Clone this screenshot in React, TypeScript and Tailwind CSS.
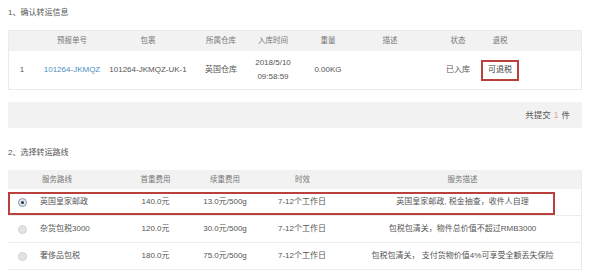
import React from 'react'

interface Route {
  name: string
  first: string
  next: string
  time: string
  desc: string
  selected?: boolean
}

const routes: Route[] = [
  { name: '英国皇家邮政', first: '140.0元', next: '13.0元/500g', time: '7-12个工作日', desc: '英国皇家邮政, 税金抽查，收件人自理', selected: true },
  { name: '杂货包税3000', first: '120.0元', next: '30.0元/500g', time: '7-12个工作日', desc: '包税包清关，物件总价值不超过RMB3000' },
  { name: '奢侈品包税', first: '180.0元', next: '75.0元/500g', time: '7-12个工作日', desc: '包税包清关， 支付货物价值4%可享受全额丢失保险' },
]

const cols1 = 'grid grid-cols-[26px_74px_78px_68px_36px_74px_50px_22px_42px_42px_1fr]'
const cols2 = 'grid grid-cols-[28px_89px_61px_78px_80px_1fr]'

export default function App() {
  return (
    <div
      className="h-[279px] w-[591px] overflow-hidden bg-white px-2 text-[8px] text-[#555]"
      style={{ fontFamily: '"Liberation Sans", "Noto Sans CJK SC", sans-serif' }}
    >
      {/* Section 1 */}
      <div className="pt-[8px] leading-[10px]">1、确认转运信息</div>

      <div className="mt-[12px] w-[574px] border border-[#ebebeb]">
        <div className={`${cols1} h-[20px] items-center bg-[#f2f2f2] text-center text-[7.5px] text-[#777]`}>
          <span />
          <span>预报单号</span>
          <span>包裹</span>
          <span>所属仓库</span>
          <span>入库时间</span>
          <span>重量</span>
          <span>描述</span>
          <span />
          <span>状态</span>
          <span>退税</span>
          <span />
        </div>
        <div className={`${cols1} h-[38px] items-center text-center`}>
          <span>1</span>
          <span className="text-[#4a8fc4]">101264-JKMQZ</span>
          <span>101264-JKMQZ-UK-1</span>
          <span>英国仓库</span>
          <span className="leading-[14px] whitespace-nowrap">
            2018/5/10
            <br />
            09:58:59
          </span>
          <span>0.00KG</span>
          <span />
          <span />
          <span>已入库</span>
          <span className="flex justify-center">
            <span className="flex h-[21px] w-[38px] items-center justify-center border-2 border-[#b8403d] text-[#444]">
              可退税
            </span>
          </span>
          <span />
        </div>
      </div>

      <div className="mt-[12px] flex h-[26px] w-[574px] items-center justify-end bg-[#f2f2f2] pr-[12px] text-[8.5px] text-[#555]">
        共提交 <span className="mx-[3px] text-[#eaa08e]">1</span> 件
      </div>

      {/* Section 2 */}
      <div className="mt-[20px] leading-[10px]">2、选择转运路线</div>

      <div className="mt-[12px] w-[574px] border-r border-[#ebebeb]">
        <div className={`${cols2} h-[19px] items-center bg-[#f2f2f2] text-[7.5px] text-[#777]`}>
          <span />
          <span className="pl-[6px]">服务路线</span>
          <span className="text-center">首重费用</span>
          <span className="text-center">续重费用</span>
          <span className="pl-[31px]">时效</span>
          <span className="text-center">服务描述</span>
        </div>
        {routes.map((r) => (
          <div key={r.name} className={`${cols2} relative h-[27px] items-center border-b border-[#ececec]`}>
            <span className="flex justify-center">
              {r.selected ? (
                <span className="flex h-[9px] w-[9px] items-center justify-center rounded-full border border-[#8a96a8] bg-[#dde6f2]">
                  <span className="h-[3px] w-[3px] rounded-full bg-[#333]" />
                </span>
              ) : (
                <span className="h-[9px] w-[9px] rounded-full border border-[#d0d0d0] bg-[#e4e4e4]" />
              )}
            </span>
            <span className="pl-[4px]">{r.name}</span>
            <span className="text-center">{r.first}</span>
            <span className="text-center">{r.next}</span>
            <span className="pl-[14px]">{r.time}</span>
            <span className="text-center">{r.desc}</span>
            {r.selected && (
              <div className="absolute left-0 top-[3px] h-[23px] w-[547px] border-2 border-[#b8403d]" />
            )}
          </div>
        ))}
      </div>
    </div>
  )
}
